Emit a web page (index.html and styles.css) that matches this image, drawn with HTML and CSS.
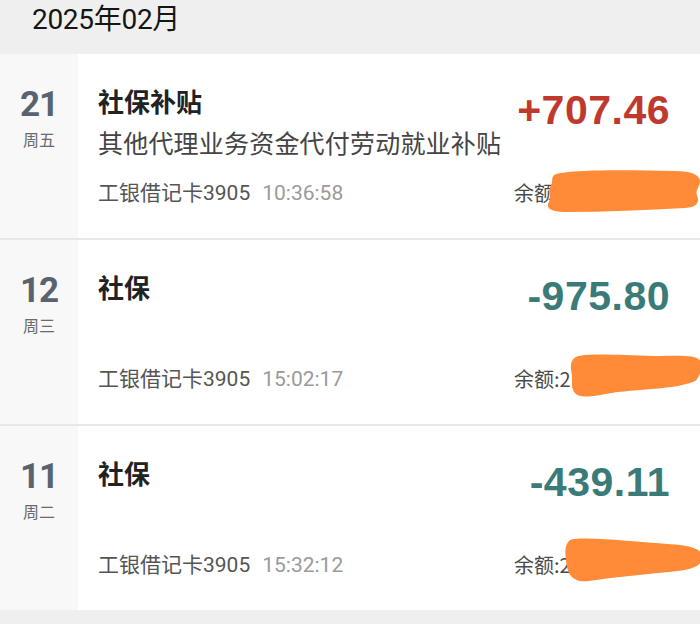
FILE: index.html
```html
<!DOCTYPE html>
<html lang="zh-CN">
<head>
<meta charset="utf-8">
<link rel="stylesheet" href="styles.css">
</head>
<body>
<div class="page">
  <div class="month">2025年02月</div>

  <div class="row">
    <div class="date"><div class="day">21</div><div class="week">周五</div></div>
    <div class="info">
      <div class="title">社保补贴</div>
      <div class="desc">其他代理业务资金代付劳动就业补贴</div>
      <div class="meta">工银借记卡3905<span class="time">10:36:58</span></div>
    </div>
    <div class="money">
      <div class="amount income">+707.46</div>
      <div class="balance">余额:2</div>
    </div>
    <svg class="blot blot1" viewBox="0 0 155 45" preserveAspectRatio="none"><path d="M14 6 C40 2 90 3 130 4 C146 4 155 8 155 14 C155 20 150 22 152 28 C155 34 152 40 140 40 C100 42 60 44 20 44 C6 44 0 40 4 34 C7 29 2 24 6 18 C9 13 4 8 14 6 Z"/></svg>
  </div>

  <div class="row">
    <div class="date"><div class="day">12</div><div class="week">周三</div></div>
    <div class="info">
      <div class="title">社保</div>
      <div class="meta">工银借记卡3905<span class="time">15:02:17</span></div>
    </div>
    <div class="money">
      <div class="amount expense">-975.80</div>
      <div class="balance">余额:2</div>
    </div>
    <svg class="blot blot2" viewBox="0 0 155 45" preserveAspectRatio="none"><path d="M12 4 C30 1 60 3 100 4 C130 4 150 2 154 10 C156 16 152 24 148 28 C130 36 90 36 50 40 C30 43 14 46 8 40 C2 34 6 28 4 20 C2 12 4 6 12 4 Z"/></svg>
  </div>

  <div class="row">
    <div class="date"><div class="day">11</div><div class="week">周二</div></div>
    <div class="info">
      <div class="title">社保</div>
      <div class="meta">工银借记卡3905<span class="time">15:32:12</span></div>
    </div>
    <div class="money">
      <div class="amount expense">-439.11</div>
      <div class="balance">余额:2</div>
    </div>
    <svg class="blot blot3" viewBox="0 0 155 45" preserveAspectRatio="none"><path d="M14 3 C40 1 80 6 120 8 C140 9 155 12 155 20 C155 28 148 32 130 34 C100 37 60 40 30 44 C16 46 8 40 6 32 C4 22 2 12 6 7 C8 4 10 3 14 3 Z"/></svg>
  </div>
</div>
</body>
</html>
```

FILE: styles.css
```css
* { box-sizing: border-box; }
html, body { margin: 0; padding: 0; }
body {
  background: #efefef;
  font-family: "Roboto", "Noto Sans CJK SC", sans-serif;
  width: 700px;
  height: 624px;
  overflow: hidden;
}
.page { display: flex; flex-direction: column; }
.month {
  height: 54px;
  padding-left: 32px;
  font-size: 28px;
  line-height: 40px;
  color: #151515;
  letter-spacing: -0.3px;
}
.row {
  position: relative;
  height: 186px;
  background: #fff;
  border-bottom: 2px solid #e7e7e7;
  display: grid;
  grid-template-columns: 78px minmax(0, 1fr) 154px;
  column-gap: 20px;
  padding-right: 30px;
  overflow: hidden;
}
.row:last-child { border-bottom: none; height: 184px; }
.date {
  background: #f8f8f8;
  display: flex;
  flex-direction: column;
  align-items: center;
  padding-top: 31px;
}
.day {
  font-family: "Roboto", sans-serif;
  font-weight: 700;
  font-size: 35px;
  line-height: 40px;
  color: #59636f;
  letter-spacing: -1px;
}
.week {
  font-family: "Noto Sans CJK SC", sans-serif;
  font-size: 16px;
  line-height: 24px;
  color: #6a6a6a;
  margin-top: 2px;
}
.info {
  display: flex;
  flex-direction: column;
  padding-top: 30px;
  padding-bottom: 31px;
  min-width: 0;
}
.title {
  font-family: "Noto Sans CJK SC", sans-serif;
  font-weight: 700;
  font-size: 26px;
  line-height: 34px;
  color: #222;
}
.desc {
  font-family: "Noto Sans CJK SC", sans-serif;
  font-size: 25px;
  line-height: 36px;
  color: #444;
  margin-top: 6px;
  white-space: nowrap;
  letter-spacing: 0.2px;
}
.meta {
  margin-top: auto;
  font-size: 21px;
  line-height: 28px;
  color: #555;
}
.time { color: #9a9a9a; margin-left: 12px; }
.money {
  display: flex;
  flex-direction: column;
  padding-top: 34px;
  padding-bottom: 31px;
}
.amount {
  margin-left: -40px;
  font-family: "Liberation Sans", sans-serif;
  font-weight: 700;
  font-size: 41px;
  line-height: 44px;
  text-align: right;
  letter-spacing: 0.5px;
  white-space: nowrap;
}
.income { color: #c0392f; }
.expense { color: #3a7b78; }
.balance {
  margin-top: auto;
  margin-left: -2px;
  font-family: "Noto Sans CJK SC", sans-serif;
  font-size: 20px;
  line-height: 28px;
  color: #4a4a4a;
}
.blot {
  position: absolute;
  fill: #ff8b38;
}
.blot1 { left: 545px; top: 113px; width: 155px; height: 46px; }
.blot2 { left: 568px; top: 112px; width: 134px; height: 46px; }
.blot3 { left: 562px; top: 110px; width: 140px; height: 46px; }
```
